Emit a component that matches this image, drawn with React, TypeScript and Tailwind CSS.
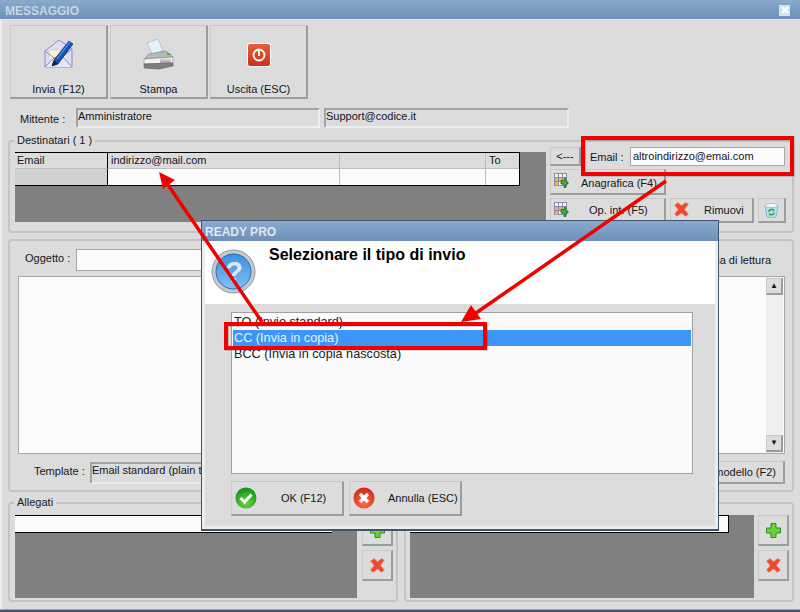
import type { ReactNode } from "react";

const raised =
  "bg-[#dcdcdc] border border-t-[#c9c9c9] border-l-[#c9c9c9] border-r-2 border-b-2 border-r-[#9c9c9c] border-b-[#9c9c9c] border-solid";
const sunken =
  "bg-[#dcdcdc] border-2 border-t-[#a3a3a3] border-l-[#a3a3a3] border-r-[#ececec] border-b-[#ececec] border-solid";

function EnvelopeIcon() {
  return (
    <svg width="30" height="31" viewBox="0 0 30 31">
      <path d="M1 12 L15 1 L28 10 V28 H1Z" fill="#dcdcf6" stroke="#8b8bd0" />
      <path d="M5 11 H23 V20 L14 25 L5 19Z" fill="#fbf3d0" stroke="#c9c4a0" strokeWidth="0.5" />
      <path d="M1 28 L11 18 L15 21 L19 18 L28 28" fill="#e6e6fa" stroke="#8b8bd0" />
      <path d="M1 12 L14 22 L28 10" fill="none" stroke="#8b8bd0" />
      <path d="M25 2 L29 5 L14 25 L8 27 L10 21Z" fill="#1450b8" stroke="#0d2f78" strokeWidth="0.7" />
      <path d="M26 3 L13 20" stroke="#5f95ea" strokeWidth="1.2" />
      <path d="M10 21 L14 25 L8 27Z" fill="#10204a" />
    </svg>
  );
}

function PrinterIcon() {
  return (
    <svg width="31" height="31" viewBox="0 0 31 31">
      <path d="M4 4 L15 0 L20 12 L9 15Z" fill="#e4f3fb" stroke="#9ab8c8" strokeWidth="0.7" />
      <path d="M6 15 L23 12 L30 18 L1 20Z" fill="#b4bab6" stroke="#7c827e" strokeWidth="0.6" />
      <path d="M1 20 L30 18 V24 L1 25Z" fill="#f1f1f1" stroke="#8e8e8e" strokeWidth="0.7" />
      <path d="M1 25 L30 24 V27 L16 30 L1 29Z" fill="#7e7e7e" stroke="#5e5e5e" strokeWidth="0.6" />
      <path d="M17 23 H28" stroke="#6a6a6a" strokeWidth="1" />
      <path d="M17 21 H28" stroke="#a0a0a0" strokeWidth="1" />
      <rect x="24" y="14" width="3.5" height="2" fill="#38c338" />
    </svg>
  );
}

function PowerIcon() {
  return (
    <svg width="24" height="24" viewBox="0 0 24 24">
      <defs>
        <linearGradient id="pw" x1="0" y1="0" x2="0" y2="1">
          <stop offset="0" stopColor="#ea5f3c" />
          <stop offset="1" stopColor="#c8321a" />
        </linearGradient>
      </defs>
      <rect x="0.5" y="0.5" width="23" height="23" rx="2.5" fill="url(#pw)" stroke="#fff" />
      <circle cx="12" cy="12" r="5.5" fill="none" stroke="#fff" strokeWidth="1.8" />
      <rect x="11" y="7.5" width="2" height="5.5" fill="#fff" />
    </svg>
  );
}

function GridPlusIcon() {
  return (
    <svg width="15" height="15" viewBox="0 0 15 15">
      <rect x="0.5" y="0.5" width="12" height="12" fill="#f2f2fa" stroke="#8c8ca8" />
      <rect x="1" y="5" width="7" height="3.5" fill="#f4b24a" />
      <rect x="1" y="9" width="3.5" height="3.5" fill="#f4b24a" />
      <path d="M4.5 0.5 V12.5 M8.5 0.5 V12.5 M0.5 4.5 H12.5 M0.5 8.5 H12.5" stroke="#8c8ca8" />
      <path d="M7 7.5 H10 V5.5 H12 V9 H14 V11 H12 V14.5 H10 V11 H7Z" fill="#3fb52e" stroke="#175f12" strokeWidth="0.7" />
    </svg>
  );
}

function RedCross({ size = 15 }: { size?: number }) {
  return (
    <svg width={size} height={size} viewBox="0 0 15 15">
      <path
        d="M0.5 3 L4 0.5 L7.5 3.5 L11.5 0.5 L14.5 2 L10.5 7.5 L14.5 12 L11.5 14.5 L7.5 11 L3 14.5 L0.5 12 L4 7.5Z"
        fill="#ea4a2e"
        stroke="#f29a7c"
        strokeWidth="0.7"
      />
    </svg>
  );
}

function GreenPlus() {
  return (
    <svg width="15" height="15" viewBox="0 0 15 15">
      <path d="M5 0.5 H10 V5 H14.5 V10 H10 V14.5 H5 V10 H0.5 V5 H5Z" fill="#67d33d" stroke="#2f8b1f" />
    </svg>
  );
}

function BinIcon() {
  return (
    <svg width="15" height="15" viewBox="0 0 15 15">
      <path d="M1 3 L3 14 Q7.5 15.5 12 14 L14 3Z" fill="#b7def5" stroke="#6fa8c8" strokeWidth="0.7" />
      <ellipse cx="7.5" cy="2.5" rx="6.5" ry="2" fill="#f2fafe" stroke="#6fa8c8" strokeWidth="0.6" />
      <path d="M5 9 A2.6 2.6 0 0 1 10 8 M10 9.5 A2.6 2.6 0 0 1 5.2 10.5" fill="none" stroke="#2ea82e" strokeWidth="1.6" />
    </svg>
  );
}

function HelpIcon() {
  return (
    <svg width="45" height="45" viewBox="0 0 45 45">
      <defs>
        <linearGradient id="hp" x1="0" y1="0" x2="0" y2="1">
          <stop offset="0" stopColor="#3f8ee0" />
          <stop offset="1" stopColor="#7fc0f5" />
        </linearGradient>
      </defs>
      <circle cx="22.5" cy="22.5" r="21.5" fill="#c3c9cd" stroke="#8f979c" />
      <circle cx="22.5" cy="22.5" r="17.5" fill="url(#hp)" stroke="#2d6bb0" />
      <text x="23" y="33" textAnchor="middle" fontSize="29" fontWeight="700" fill="#dfeaf8" fontFamily="'Liberation Sans', sans-serif">
        ?
      </text>
    </svg>
  );
}

function RoundIcon({ kind }: { kind: "ok" | "ko" }) {
  const ok = kind === "ok";
  return (
    <svg width="22" height="22" viewBox="0 0 22 22">
      <defs>
        <radialGradient id={ok ? "rok" : "rko"} cx="0.5" cy="0.75" r="0.8">
          <stop offset="0" stopColor={ok ? "#6bd43c" : "#ff7048"} />
          <stop offset="1" stopColor={ok ? "#0d8a18" : "#c8200f"} />
        </radialGradient>
      </defs>
      <circle cx="11" cy="11" r="10.5" fill={`url(#${ok ? "rok" : "rko"})`} />
      {ok ? (
        <path d="M5.5 11 L9.5 15 L16.5 7.5" fill="none" stroke="#fff" strokeWidth="3" />
      ) : (
        <path d="M7 7 L15 15 M15 7 L7 15" fill="none" stroke="#fff" strokeWidth="3.2" />
      )}
    </svg>
  );
}

function BigButton({ icon, label }: { icon: ReactNode; label: string }) {
  return (
    <div className={`${raised} w-[98px] h-[74px] flex flex-col items-center`}>
      <div className="h-[55px] flex items-center justify-center pt-[2px]">{icon}</div>
      <span className="mt-[1px]">{label}</span>
    </div>
  );
}

function Group({ label, className, children }: { label: string; className: string; children: ReactNode }) {
  return (
    <div className={`relative border-2 border-[#c4c4c4] rounded-[4px] ${className}`}>
      {label && <span className="absolute left-[4px] top-[-10px] bg-[#dcdcdc] px-[3px] leading-[16px]">{label}</span>}
      {children}
    </div>
  );
}

function SmallIconButton({ children }: { children: ReactNode }) {
  return <div className={`${raised} w-[31px] h-[31px] flex items-center justify-center`}>{children}</div>;
}

export default function App() {
  return (
    <div className="relative w-[800px] h-[612px] overflow-hidden bg-[#dcdcdc] text-[#14141e] text-[11px] leading-[14px] font-['Liberation_Sans',sans-serif]">
      <div className="h-[20px] bg-gradient-to-b from-[#8aaacd] to-[#6d90b9] flex items-center justify-between pl-[5px] pr-[10px] border-b border-[#e6eaf0]">
        <span className="text-[12px] font-bold text-[#c9d5e4] pt-[3px]">MESSAGGIO</span>
        <span className="w-[11px] h-[11px] bg-[#d5e0ec] flex items-center justify-center mt-[1px]">
          <svg width="8" height="8" viewBox="0 0 8 8">
            <path d="M1 1 L7 7 M7 1 L1 7" stroke="#fff" strokeWidth="2" />
          </svg>
        </span>
      </div>

      <div className="h-[589px] pl-[8px] border-l-2 border-[#eeeeee]">
        <div className="flex gap-[2px] pt-[5px]">
          <BigButton icon={<EnvelopeIcon />} label="Invia (F12)" />
          <BigButton icon={<PrinterIcon />} label="Stampa" />
          <BigButton icon={<PowerIcon />} label="Uscita (ESC)" />
        </div>

        <div className="flex items-center mt-[9px] h-[20px]">
          <span className="w-[66px] pl-[10px] pt-[2px]">Mittente :</span>
          <div className={`${sunken} w-[244px] h-[20px] leading-[13px]`}>Amministratore</div>
          <div className={`${sunken} w-[245px] h-[20px] ml-[4px] leading-[13px]`}>Support@codice.it</div>
        </div>

        <Group label="Destinatari ( 1 )" className="w-[786px] h-[93px] mt-[12px] ml-[-2px] flex pt-[5px] pl-[5px]">
          <div className="w-[531px] h-[70px] mt-[5px] bg-[#808080]">
            <div className="grid grid-cols-[93px_232px_146px_33px] grid-rows-[16px_16px] w-[505px] h-[34px] border-y border-r border-black bg-[#dcdcdc]">
              <div className="pl-[2px] border-b border-[#bdbdbd] border-r border-r-black">Email</div>
              <div className="pl-[3px] border-b border-[#bdbdbd] border-r">indirizzo@mail.com</div>
              <div className="border-b border-[#bdbdbd] border-r"></div>
              <div className="pl-[3px] border-b border-[#bdbdbd]">To</div>
              <div className="bg-[#d2d2d2] border-r border-black"></div>
              <div className="bg-[#fbfbfb] border-r border-[#bdbdbd]"></div>
              <div className="bg-[#fbfbfb] border-r border-[#bdbdbd]"></div>
              <div className="bg-[#fbfbfb]"></div>
            </div>
          </div>
          <div className="ml-[4px] flex flex-col">
            <div className="flex items-center h-[19px]">
              <div className={`${raised} w-[31px] h-[19px] flex items-center justify-center`}>&lt;---</div>
              <span className="ml-[9px] w-[40px]">Email :</span>
              <div className="w-[155px] h-[19px] bg-[#fbfbfb] border border-[#a8a8a8] pl-[2px] leading-[17px]">
                altroindirizzo@emai.com
              </div>
            </div>
            <div className={`${raised} w-[116px] h-[26px] mt-[3px] flex items-center pl-[3px] pb-[2px]`}>
              <GridPlusIcon />
              <span className="ml-[12px] mt-[4px]">Anagrafica (F4)</span>
            </div>
            <div className="flex mt-[3px]">
              <div className={`${raised} w-[116px] h-[25px] flex items-center pl-[3px] pb-[2px]`}>
                <GridPlusIcon />
                <span className="ml-[20px] mt-[2px]">Op. int. (F5)</span>
              </div>
              <div className={`${raised} w-[84px] h-[25px] ml-[4px] flex items-center pl-[3px] pb-[2px]`}>
                <RedCross />
                <span className="ml-[15px] mt-[2px]">Rimuovi</span>
              </div>
              <div className={`${raised} w-[28px] h-[25px] ml-[4px] flex items-center justify-center`}>
                <BinIcon />
              </div>
            </div>
          </div>
        </Group>

        <Group label="" className="w-[786px] h-[253px] mt-[6px] ml-[-2px] pt-[8px] pl-[8px]">
          <div className="flex items-center h-[22px]">
            <span className="w-[58px] pl-[7px] mb-[5px]">Oggetto :</span>
            <div className="w-[400px] h-[22px] bg-[#fbfbfb] border border-[#a8a8a8]"></div>
            <span className="ml-auto mr-[21px]">Conferma di lettura</span>
          </div>
          <div className="flex justify-end w-[767px] h-[178px] mt-[5px] bg-[#fbfbfb] border border-[#a8a8a8] pr-[1px]">
            <div className="w-[17px] flex flex-col justify-between py-px bg-[#efefef]">
              <div className={`${raised} h-[17px] flex items-center justify-center text-[8px]`}>▲</div>
              <div className={`${raised} h-[17px] flex items-center justify-center text-[8px]`}>▼</div>
            </div>
          </div>
          <div className="flex items-center h-[23px] mt-[7px]">
            <span className="w-[72px] pl-[16px] mb-[3px]">Template :</span>
            <div className={`${sunken} w-[300px] h-[22px] leading-[13px]`}>Email standard (plain text)</div>
            <div className={`${raised} ml-auto mr-[7px] w-[200px] h-[23px] flex items-center justify-end pr-[7px] pb-[1px]`}>
              modello (F2)
            </div>
          </div>
        </Group>

        <div className="flex mt-[10px] ml-[-2px] gap-[6px]">
          <Group label="Allegati" className="w-[390px] h-[100px] pt-[11px] pl-[5px] flex">
            <div className="w-[342px] h-[83px] bg-[#808080]">
              <div className="w-[317px] h-[18px] bg-[#fbfbfb] border-y border-black"></div>
            </div>
            <div className="ml-[5px] flex flex-col gap-[4px]">
              <SmallIconButton>
                <GreenPlus />
              </SmallIconButton>
              <SmallIconButton>
                <RedCross />
              </SmallIconButton>
            </div>
          </Group>
          <Group label="" className="w-[390px] h-[100px] pt-[11px] pl-[4px] flex">
            <div className="w-[344px] h-[83px] bg-[#808080]">
              <div className="w-[319px] h-[18px] bg-[#fbfbfb] border-y border-r border-black"></div>
            </div>
            <div className="ml-[4px] flex flex-col gap-[4px]">
              <SmallIconButton>
                <GreenPlus />
              </SmallIconButton>
              <SmallIconButton>
                <RedCross />
              </SmallIconButton>
            </div>
          </Group>
        </div>
      </div>
      <div className="h-[3px] bg-[#44546a] border-t border-[#9aa5b3]"></div>

      {/* finestra di dialogo sopra il messaggio */}
      <div className="absolute left-[201px] top-[220px] w-[518px] h-[311px] bg-[#dcdcdc] border border-[#3e5470] border-b-2 flex flex-col">
        <div className="h-[20px] shrink-0 bg-gradient-to-b from-[#8aaacd] to-[#6d90b9] flex items-center pl-[3px]">
          <span className="text-[12px] font-bold text-[#dfe7f0] pt-[2px]">READY PRO</span>
        </div>
        <div className="flex-1 flex flex-col border-x-[3px] border-b-[3px] border-[#ededed]">
          <div className="h-[63px] shrink-0 bg-white flex pl-[6px] pt-[8px]">
            <HelpIcon />
            <span className="ml-[13px] mt-[-4px] text-[16px] leading-[20px] font-bold text-black">
              Selezionare il tipo di invio
            </span>
          </div>
          <div className="ml-[26px] mt-[8px] w-[462px] h-[162px] bg-[#fafafa] border border-[#a0a0a0] pt-[1px] px-px text-[12.7px] leading-[16px] text-[#222]">
            <div className="h-[16px] pl-px">TO (Invio standard)</div>
            <div className="h-[16px] pl-px bg-[#3d95f8] text-[#e8f1ff]">CC (Invia in copia)</div>
            <div className="h-[16px] pl-px">BCC (Invia in copia nascosta)</div>
          </div>
          <div className="flex ml-[26px] mt-[7px] gap-[5px]">
            <div className={`${raised} w-[113px] h-[35px] flex items-center pl-[3px] pb-[1px]`}>
              <RoundIcon kind="ok" />
              <span className="ml-[24px]">OK (F12)</span>
            </div>
            <div className={`${raised} w-[113px] h-[35px] flex items-center pl-[3px] pb-[1px]`}>
              <RoundIcon kind="ko" />
              <span className="ml-[13px]">Annulla (ESC)</span>
            </div>
          </div>
        </div>
      </div>

      {/* annotazioni rosse */}
      <svg className="absolute left-0 top-0" width="800" height="612" viewBox="0 0 800 612">
        <rect x="584" y="139" width="209" height="36" fill="none" stroke="#000" strokeOpacity="0.15" strokeWidth="4" />
        <rect x="583" y="138" width="209" height="36" fill="none" stroke="#f00000" strokeWidth="4" />
        <rect x="227" y="325" width="259" height="24" fill="none" stroke="#000" strokeOpacity="0.15" strokeWidth="4" />
        <rect x="226" y="324" width="259" height="24" fill="none" stroke="#f00000" strokeWidth="4" />
        <path d="M262 322 L166 182" stroke="#f00000" strokeWidth="3.5" fill="none" />
        <path d="M159 172 L175 180 L163 189Z" fill="#f00000" />
        <path d="M666 181 L476 313" stroke="#f00000" strokeWidth="3.5" fill="none" />
        <path d="M461 322 L471 305 L481 319Z" fill="#f00000" />
      </svg>
    </div>
  );
}
